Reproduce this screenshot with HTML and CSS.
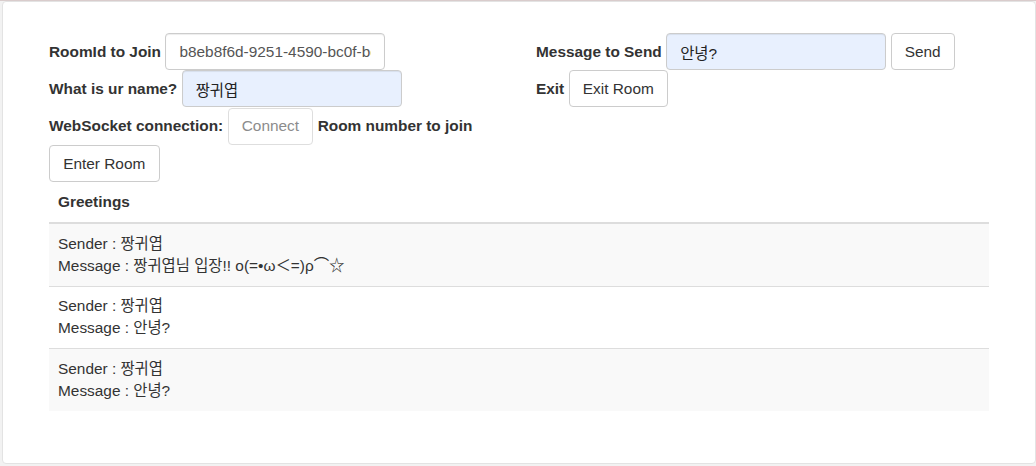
FILE: index.html
```html
<!DOCTYPE html>
<html lang="ko">
<head>
<meta charset="utf-8">
<title>Chat</title>
<link rel="stylesheet" href="styles.css">
</head>
<body>
<div class="frame">
  <div class="container">
    <div class="controls">
      <div class="col">
        <div class="row">
          <label class="lbl">RoomId to Join</label>
          <input class="field" type="text" value="b8eb8f6d-9251-4590-bc0f-bcd1a2e3f4a5">
        </div>
        <div class="row">
          <label class="lbl">What is ur name?</label>
          <input class="field filled" type="text" value="짱귀엽">
        </div>
        <div class="row">
          <label class="lbl">WebSocket connection:</label>
          <button class="btn" disabled>Connect</button>
          <label class="lbl">Room number to join</label>
        </div>
        <div class="row">
          <button class="btn">Enter Room</button>
        </div>
      </div>
      <div class="col">
        <div class="row">
          <label class="lbl">Message to Send</label>
          <input class="field filled" type="text" value="안녕?">
          <button class="btn">Send</button>
        </div>
        <div class="row">
          <label class="lbl">Exit</label>
          <button class="btn">Exit Room</button>
        </div>
      </div>
    </div>
    <table class="table">
      <thead>
        <tr><th>Greetings</th></tr>
      </thead>
      <tbody>
        <tr><td>Sender : 짱귀엽<br>Message : 짱귀엽님 입장!! o(=•ω＜=)ρ⌒☆</td></tr>
        <tr><td>Sender : 짱귀엽<br>Message : 안녕?</td></tr>
        <tr><td>Sender : 짱귀엽<br>Message : 안녕?</td></tr>
      </tbody>
    </table>
  </div>
</div>
</body>
</html>
```
FILE: styles.css
```css
html, body {
  margin: 0;
  padding: 0;
}
body {
  background: #f2f2f2;
  border-top: 1px solid #d9cccc;
  font-family: "Liberation Sans", Arial, "Noto Sans CJK KR", sans-serif;
  font-size: 15.4px;
  line-height: 22px;
  color: #333;
  height: 465px;
  overflow: hidden;
}
.frame {
  margin-left: 2px;
  width: 1032px;
  height: 461px;
  background: #fff;
  border: 1px solid #e3e3e3;
  border-radius: 4px;
}
.container {
  width: 940px;
  margin-left: 46px;
  padding-top: 31px;
}
.controls {
  display: grid;
  grid-template-columns: 487px 1fr;
}
.row {
  display: flex;
  align-items: center;
  gap: 4.4px;
  height: 37.33px;
}
.lbl {
  font-weight: bold;
  white-space: nowrap;
}
.field {
  box-sizing: border-box;
  width: 220px;
  height: 37px;
  padding: 6px 13px;
  font: inherit;
  color: #555;
  background: #fff;
  border: 1px solid #ccc;
  border-radius: 4px;
  box-shadow: inset 0 1px 1px rgba(0,0,0,.075);
  outline: none;
}
.field.filled {
  background: #e8f0fe;
  color: #222;
}
.btn {
  box-sizing: border-box;
  height: 37px;
  padding: 6px 13.2px;
  font: inherit;
  color: #333;
  background: #fff;
  border: 1px solid #ccc;
  border-radius: 4px;
  white-space: nowrap;
}
.btn:disabled {
  color: #8c8c8c;
  border-color: #dedede;
}
.table {
  width: 940px;
  border-collapse: collapse;
  border-spacing: 0;
}
.table th {
  text-align: left;
  font-weight: bold;
  padding: 8.8px 9px;
  line-height: 22px;
  border-bottom: 2px solid #ddd;
}
.table td {
  padding: 8.8px 9px;
  line-height: 22px;
  border-top: 1px solid #ddd;
}
.table tbody tr:first-child td {
  border-top: 0;
}
.table tbody tr:nth-child(odd) td {
  background: #f9f9f9;
}
```
